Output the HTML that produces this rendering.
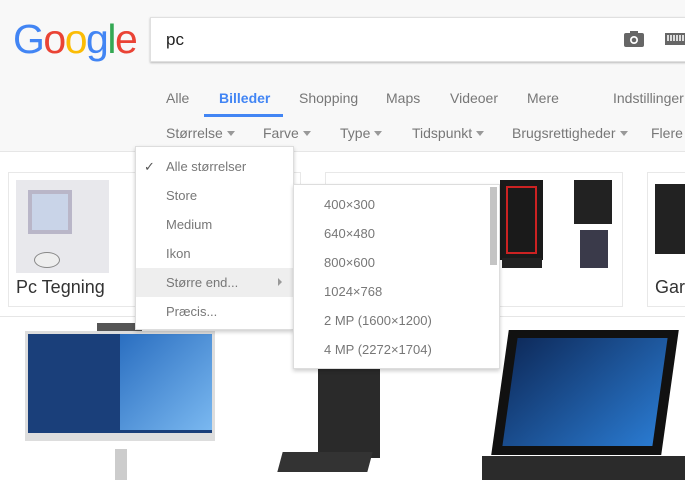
<!DOCTYPE html>
<html><head><meta charset="utf-8"><style>
*{margin:0;padding:0;box-sizing:border-box}
body{width:685px;height:480px;overflow:hidden;background:#fff;font-family:"Liberation Sans",Arial,sans-serif;position:relative}
.hdr{position:absolute;left:0;top:0;width:685px;height:152px;background:#f8f8f8;border-bottom:1px solid #e6e6e6}
.abs{position:absolute}
.logo{left:13px;top:16px;font-size:41px;letter-spacing:-1.5px;font-family:"Liberation Sans",sans-serif}
.search{left:150px;top:17px;width:540px;height:45px;background:#fff;box-shadow:0 1px 2px rgba(0,0,0,.25);border:1px solid #e0e0e0}
.tab{top:90px;font-size:14px;color:#777}
.flt{top:125px;font-size:14px;color:#777}
.caret{display:inline-block;width:0;height:0;border-left:4px solid transparent;border-right:4px solid transparent;border-top:5px solid #999;margin-left:4px;vertical-align:2px}
.card{border:1px solid #e8e8e8;background:#fff}
.menu{background:#fff;border:1px solid #ddd;box-shadow:0 2px 4px rgba(0,0,0,.2)}
.mi{position:absolute;left:0;width:100%;height:29px;font-size:13px;color:#777;line-height:29px}
</style></head><body>
<div class="hdr"></div>
<div class="abs logo"><span style="color:#4285f4">G</span><span style="color:#ea4335">o</span><span style="color:#fbbc05">o</span><span style="color:#4285f4">g</span><span style="color:#34a853">l</span><span style="color:#ea4335">e</span></div>
<div class="abs search"></div>
<div class="abs" style="left:166px;top:30px;font-size:17px;color:#222">pc</div>
<svg class="abs" style="left:623px;top:30px" width="22" height="18"><rect x="1" y="3" width="20" height="14" rx="2" fill="#666"/><rect x="7" y="1" width="8" height="4" fill="#666"/><circle cx="11" cy="10" r="4" fill="#fff"/><circle cx="11" cy="10" r="2.3" fill="#666"/></svg>
<div class="abs" style="left:665px;top:33px;width:22px;height:12px;background:#666"></div>
<div class="abs" style="left:667px;top:35px;width:18px;height:6px;background:repeating-linear-gradient(90deg,#ddd 0 2px,#666 2px 3px)"></div>
<div class="abs tab" style="left:166px">Alle</div>
<div class="abs tab" style="left:219px;color:#4285f4;font-weight:bold">Billeder</div>
<div class="abs" style="left:204px;top:114px;width:79px;height:3px;background:#4285f4"></div>
<div class="abs tab" style="left:299px">Shopping</div>
<div class="abs tab" style="left:386px">Maps</div>
<div class="abs tab" style="left:450px">Videoer</div>
<div class="abs tab" style="left:527px">Mere</div>
<div class="abs tab" style="left:613px">Indstillinger</div>
<div class="abs flt" style="left:166px">Størrelse<span class="caret"></span></div>
<div class="abs flt" style="left:263px">Farve<span class="caret"></span></div>
<div class="abs flt" style="left:340px">Type<span class="caret"></span></div>
<div class="abs flt" style="left:412px">Tidspunkt<span class="caret"></span></div>
<div class="abs flt" style="left:512px">Brugsrettigheder<span class="caret"></span></div>
<div class="abs flt" style="left:651px">Flere</div>

<div class="abs card" style="left:8px;top:172px;width:293px;height:135px"></div>
<div class="abs" style="left:16px;top:180px;width:93px;height:93px;background:#e8e8ec"></div>
<div class="abs" style="left:28px;top:190px;width:44px;height:44px;background:#c9d4e8;border:4px solid #b9b6c8"></div>
<div class="abs" style="left:34px;top:252px;width:26px;height:16px;border-radius:50%;background:#eee;border:1px solid #888"></div>
<div class="abs" style="left:16px;top:277px;font-size:18px;color:#333">Pc Tegning</div>
<div class="abs card" style="left:325px;top:172px;width:298px;height:135px"></div>
<div class="abs" style="left:500px;top:180px;width:43px;height:80px;background:#1a1a1a;outline:2px solid #c22;outline-offset:-8px"></div>
<div class="abs" style="left:502px;top:258px;width:40px;height:10px;background:#222"></div>
<div class="abs" style="left:574px;top:180px;width:38px;height:44px;background:#222"></div>
<div class="abs" style="left:580px;top:230px;width:28px;height:38px;background:#3a3a4a"></div>
<div class="abs card" style="left:647px;top:172px;width:50px;height:135px"></div>
<div class="abs" style="left:655px;top:184px;width:30px;height:70px;background:#222"></div>
<div class="abs" style="left:655px;top:277px;font-size:18px;color:#333">Gar</div>
<div class="abs" style="left:0;top:316px;width:685px;height:1px;background:#e6e6e6"></div>

<div class="abs" style="left:97px;top:323px;width:45px;height:8px;background:#555"></div>
<div class="abs" style="left:25px;top:331px;width:190px;height:110px;background:#1a3f7a;border:3px solid #ddd;border-bottom-width:8px"></div>
<div class="abs" style="left:120px;top:334px;width:92px;height:96px;background:linear-gradient(135deg,#2a6ec0,#7ab8f0)"></div>
<div class="abs" style="left:115px;top:449px;width:12px;height:31px;background:#ccc"></div>
<div class="abs" style="left:318px;top:368px;width:62px;height:90px;background:#2a2a2a"></div>
<div class="abs" style="left:280px;top:452px;width:90px;height:20px;background:#333;transform:skewX(-15deg)"></div>
<div class="abs" style="left:500px;top:330px;width:170px;height:125px;background:#111;transform:skewX(-8deg)"></div>
<div class="abs" style="left:510px;top:338px;width:150px;height:108px;background:linear-gradient(135deg,#0e2b5c,#2a7ad0);transform:skewX(-8deg)"></div>
<div class="abs" style="left:482px;top:456px;width:203px;height:24px;background:#2b2b2b"></div>

<div class="abs menu" style="left:135px;top:146px;width:159px;height:184px">
<div class="mi" style="top:5px;left:8px;color:#555">✓</div>
<div class="mi" style="top:5px;padding-left:30px">Alle størrelser</div>
<div class="mi" style="top:34px;padding-left:30px">Store</div>
<div class="mi" style="top:63px;padding-left:30px">Medium</div>
<div class="mi" style="top:92px;padding-left:30px">Ikon</div>
<div class="mi" style="top:121px;padding-left:30px;background:#eee">Større end...<span style="position:absolute;left:142px;top:10px;border-top:4px solid transparent;border-bottom:4px solid transparent;border-left:4px solid #999"></span></div>
<div class="mi" style="top:150px;padding-left:30px">Præcis...</div>
</div>
<div class="abs menu" style="left:293px;top:184px;width:207px;height:185px">
<div class="mi" style="top:5px;padding-left:30px">400×300</div>
<div class="mi" style="top:34px;padding-left:30px">640×480</div>
<div class="mi" style="top:63px;padding-left:30px">800×600</div>
<div class="mi" style="top:92px;padding-left:30px">1024×768</div>
<div class="mi" style="top:121px;padding-left:30px">2 MP (1600×1200)</div>
<div class="mi" style="top:150px;padding-left:30px">4 MP (2272×1704)</div>
<div style="position:absolute;left:196px;top:2px;width:7px;height:78px;background:#c4c4c4"></div>
</div>
</body></html>
